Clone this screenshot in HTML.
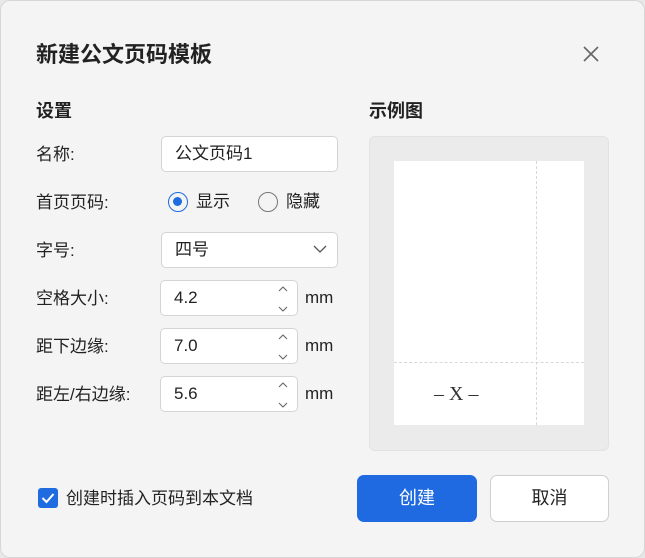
<!DOCTYPE html>
<html><head><meta charset="utf-8"><style>
*{box-sizing:border-box;margin:0;padding:0}
body{width:645px;height:558px;background:#e8e8e8;font-family:"Liberation Sans","Noto Sans CJK SC",sans-serif;color:#222;position:relative;overflow:hidden;line-height:1.2}
.dlg{position:absolute;left:0;top:0;width:645px;height:558px;background:#f4f4f4;box-shadow:inset 0 0 0 1px #d6d6d6;border-radius:10px}
.a{position:absolute}
.t{font-size:22px;font-weight:bold;left:36px;top:42px}
.h{font-size:18px;font-weight:bold}
.lbl{font-size:17px;left:36px}
.in{background:#fff;border:1px solid #d4d4d4;border-radius:5px;font-size:17px;padding-left:13px;display:flex;align-items:center}
.mm{font-size:17px;left:305px}
.sp{position:absolute;right:8px;top:4px;width:12px}
.btn{border-radius:7px;font-size:18px;display:flex;align-items:center;justify-content:center}
</style></head><body>
<div class="dlg">
<div class="a t">新建公文页码模板</div>
<svg class="a" style="left:582px;top:45px" width="18" height="18"><path d="M2 2L16 16M16 2L2 16" stroke="#666" stroke-width="1.6"/></svg>
<div class="a h" style="left:36px;top:101px">设置</div>
<div class="a h" style="left:369px;top:101px">示例图</div>

<div class="a lbl" style="top:145px">名称:</div>
<div class="a in" style="left:161px;top:136px;width:177px;height:36px">公文页码1</div>

<div class="a lbl" style="top:193px">首页页码:</div>
<div class="a" style="left:168px;top:192px;width:20px;height:20px;border:1.5px solid #1e6ce0;border-radius:50%"><div style="position:absolute;left:4px;top:4px;width:9px;height:9px;border-radius:50%;background:#1e6ce0"></div></div>
<div class="a" style="left:196px;top:192px;font-size:17px">显示</div>
<div class="a" style="left:258px;top:192px;width:20px;height:20px;border:1.5px solid #777;border-radius:50%"></div>
<div class="a" style="left:286px;top:192px;font-size:17px">隐藏</div>

<div class="a lbl" style="top:241px">字号:</div>
<div class="a in" style="left:161px;top:232px;width:177px;height:36px">四号</div>
<svg class="a" style="left:313px;top:244px" width="14" height="10"><path d="M1 2L7 8L13 2" stroke="#555" stroke-width="1.3" fill="none"/></svg>

<div class="a lbl" style="top:289px">空格大小:</div>
<div class="a in" style="left:160px;top:280px;width:138px;height:36px">4.2<svg class="sp" width="12" height="28"><path d="M2 6L6 2L10 6M2 22L6 26L10 22" stroke="#666" stroke-width="1.1" fill="none"/></svg></div>
<div class="a mm" style="top:288px">mm</div>

<div class="a lbl" style="top:337px">距下边缘:</div>
<div class="a in" style="left:160px;top:328px;width:138px;height:36px">7.0<svg class="sp" width="12" height="28"><path d="M2 6L6 2L10 6M2 22L6 26L10 22" stroke="#666" stroke-width="1.1" fill="none"/></svg></div>
<div class="a mm" style="top:336px">mm</div>

<div class="a lbl" style="top:385px">距左/右边缘:</div>
<div class="a in" style="left:160px;top:376px;width:138px;height:36px">5.6<svg class="sp" width="12" height="28"><path d="M2 6L6 2L10 6M2 22L6 26L10 22" stroke="#666" stroke-width="1.1" fill="none"/></svg></div>
<div class="a mm" style="top:384px">mm</div>

<div class="a" style="left:369px;top:136px;width:240px;height:315px;background:#ebebeb;border-radius:6px;border:1px solid #e2e2e2"></div>
<div class="a" style="left:394px;top:161px;width:190px;height:264px;background:#fff"></div>
<div class="a" style="left:536px;top:161px;width:0;height:264px;border-left:1px dashed #d8d8d8"></div>
<div class="a" style="left:394px;top:362px;width:190px;height:0;border-top:1px dashed #d8d8d8"></div>
<div class="a" style="left:434px;top:382px;font-family:'Liberation Serif',serif;font-size:20px;color:#333">– X –</div>

<div class="a" style="left:38px;top:488px;width:20px;height:20px;background:#1e6ce0;border-radius:3px"><svg width="20" height="20"><path d="M4.5 10L8.5 14L15.5 6" stroke="#fff" stroke-width="2" fill="none"/></svg></div>
<div class="a" style="left:66px;top:489px;font-size:17px">创建时插入页码到本文档</div>

<div class="a btn" style="left:357px;top:475px;width:120px;height:47px;background:#1f6ae0;color:#fff">创建</div>
<div class="a btn" style="left:490px;top:475px;width:119px;height:47px;background:#fff;border:1px solid #cfcfcf">取消</div>
</div>
</body></html>
